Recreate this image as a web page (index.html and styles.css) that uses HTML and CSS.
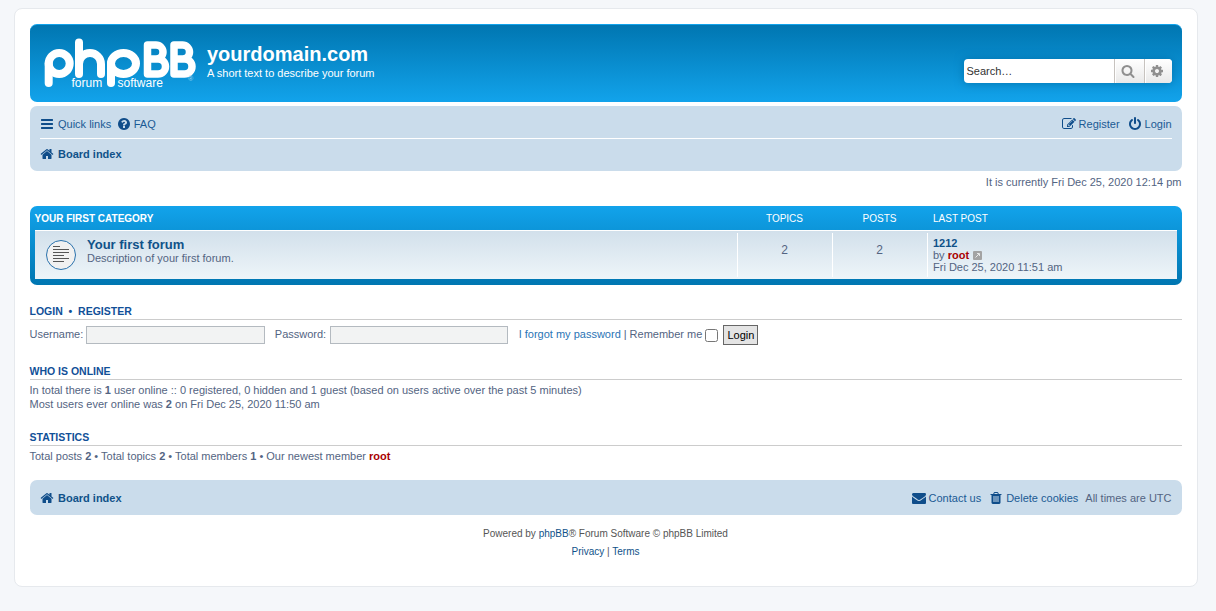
FILE: index.html
```html
<!DOCTYPE html>
<html lang="en">
<head>
<meta charset="utf-8">
<title>yourdomain.com - Index page</title>
<link rel="stylesheet" href="styles.css">
</head>
<body>
<svg class="defs" width="0" height="0" aria-hidden="true">
<symbol id="i-bars" viewBox="0 0 1792 1792"><path d="M1664 1344v128q0 26-19 45t-45 19h-1408q-26 0-45-19t-19-45v-128q0-26 19-45t45-19h1408q26 0 45 19t19 45zm0-512v128q0 26-19 45t-45 19h-1408q-26 0-45-19t-19-45v-128q0-26 19-45t45-19h1408q26 0 45 19t19 45zm0-512v128q0 26-19 45t-45 19h-1408q-26 0-45-19t-19-45v-128q0-26 19-45t45-19h1408q26 0 45 19t19 45z"/></symbol>
<symbol id="i-home" viewBox="0 0 1792 1792"><path d="M1472 992v480q0 26-19 45t-45 19h-384v-384h-256v384h-384q-26 0-45-19t-19-45v-480q0-1 .5-3t.5-3l575-474 575 474q1 2 1 6zm223-69l-62 74q-8 9-21 11h-3q-13 0-21-7l-692-577-692 577q-12 8-24 7-13-2-21-11l-62-74q-8-10-7-23.500t11-21.500l719-599q32-26 76-26t76 26l244 204v-195q0-14 9-23t23-9h192q14 0 23 9t9 23v408l219 182q10 8 11 21.500t-7 23.500z"/></symbol>
<symbol id="i-question" viewBox="0 0 1792 1792"><path d="M1024 1376v-192q0-14-9-23t-23-9h-192q-14 0-23 9t-9 23v192q0 14 9 23t23 9h192q14 0 23-9t9-23zm256-672q0-88-55.500-163t-138.500-116-170-41q-243 0-371 213-15 24 8 42l132 100q7 6 19 6 16 0 25-12 53-68 86-92 34-24 86-24 48 0 85.500 26t37.500 59q0 38-20 61t-68 45q-63 28-115.500 86.500t-52.500 125.500v36q0 14 9 23t23 9h192q14 0 23-9t9-23q0-19 21.500-49.500t54.500-49.500q32-18 49-28.500t46-35 44.500-48 28-60.500 12.500-81zm384 192q0 209-103 385.500t-279.500 279.500-385.500 103-385.500-103-279.500-279.500-103-385.500 103-385.500 279.500-279.500 385.500-103 385.500 103 279.500 279.500 103 385.500z"/></symbol>
<symbol id="i-search" viewBox="0 0 1792 1792"><path d="M1216 832q0-185-131.500-316.500t-316.500-131.500-316.500 131.500-131.500 316.500 131.500 316.500 316.500 131.500 316.500-131.500 131.500-316.500zm512 832q0 52-38 90t-90 38q-54 0-90-38l-343-342q-179 124-399 124-143 0-273.500-55.500t-225-150-150-225-55.500-273.500 55.500-273.500 150-225 225-150 273.500-55.500 273.500 55.500 225 150 150 225 55.500 273.500q0 220-124 399l343 343q37 37 37 90z"/></symbol>
<symbol id="i-cog" viewBox="0 0 1792 1792"><path d="M1152 896q0-106-75-181t-181-75-181 75-75 181 75 181 181 75 181-75 75-181zm512-109v222q0 12-8 23t-20 13l-185 28q-19 54-39 91 35 50 107 138 10 12 10 25t-9 23q-27 37-99 108t-94 71q-12 0-26-9l-138-108q-44 23-91 38-16 136-29 186-7 28-36 28h-222q-14 0-24.500-8.500t-11.500-21.500l-28-184q-49-16-90-37l-141 107q-10 9-25 9-14 0-25-11-126-114-165-168-7-10-7-23 0-12 8-23 15-21 51-66.500t54-70.500q-27-50-41-99l-183-27q-13-2-21-12.500t-8-23.500v-222q0-12 8-23t19-13l186-28q14-46 39-92-40-57-107-138-10-12-10-24 0-10 9-23 26-36 98.500-107.500t94.500-71.500q13 0 26 10l138 107q44-23 91-38 16-136 29-186 7-28 36-28h222q14 0 24.500 8.500t11.500 21.500l28 184q49 16 90 37l142-107q9-9 24-9 13 0 25 10 129 119 165 170 7 8 7 22 0 12-8 23-15 21-51 66.500t-54 70.500q26 50 41 98l183 28q13 2 21 12.500t8 23.500z"/></symbol>
<symbol id="i-power" viewBox="0 0 1792 1792"><path d="M1664 896q0 156-61 298t-164 245-245 164-298 61-298-61-245-164-164-245-61-298q0-182 80.500-343t226.500-270q43-32 95.500-25t83.500 50q32 42 24.500 94.500t-49.500 84.500q-98 74-151.500 181t-53.500 228q0 104 40.500 198.500t109.500 163.500 163.500 109.500 198.500 40.500 198.500-40.500 163.500-109.500 109.500-163.500 40.500-198.500q0-121-53.500-228t-151.500-181q-42-32-49.500-84.500t24.500-94.500q31-43 84-50t95 25q146 109 226.500 270t80.500 343zm-640-768v640q0 52-38 90t-90 38-90-38-38-90v-640q0-52 38-90t90-38 90 38 38 90z"/></symbol>
<symbol id="i-envelope" viewBox="0 0 1792 1792"><path d="M1792 710v794q0 66-47 113t-113 47h-1472q-66 0-113-47t-47-113v-794q44 49 101 87 362 246 497 345 57 42 92.500 65.500t94.500 48 110 24.500h2q51 0 110-24.500t94.500-48 92.500-65.500q170-123 498-345 57-39 100-87zm0-294q0 79-49 151t-122 123q-376 261-468 325-10 7-42.500 30.500t-54 38-52 32.500-57.500 27-50 9h-2q-23 0-50-9t-57.500-27-52-32.500-54-38-42.500-30.500q-91-64-262-182.500t-205-142.500q-62-42-117-115.500t-55-136.500q0-78 41.500-130t118.500-52h1472q65 0 112.500 47t47.500 113z"/></symbol>
<symbol id="i-trash" viewBox="0 0 1792 1792"><path d="M704 1376v-704q0-14-9-23t-23-9h-64q-14 0-23 9t-9 23v704q0 14 9 23t23 9h64q14 0 23-9t9-23zm256 0v-704q0-14-9-23t-23-9h-64q-14 0-23 9t-9 23v704q0 14 9 23t23 9h64q14 0 23-9t9-23zm256 0v-704q0-14-9-23t-23-9h-64q-14 0-23 9t-9 23v704q0 14 9 23t23 9h64q14 0 23-9t9-23zm-544-992h448l-48-117q-7-9-17-11h-317q-10 2-17 11zm928 32v64q0 14-9 23t-23 9h-96v948q0 83-47 143.500t-113 60.500h-832q-66 0-113-58.500t-47-141.500v-952h-96q-14 0-23-9t-9-23v-64q0-14 9-23t23-9h309l70-167q15-37 54-63t79-26h320q40 0 79 26t54 63l70 167h309q14 0 23 9t9 23z"/></symbol>
<symbol id="i-edit" viewBox="0 0 1792 1792"><path d="M888 1184l116-116-152-152-116 116v56h96v96h56zm440-720q-16-16-33 1l-350 350q-17 17-1 33t33-1l350-350q17-17 1-33zm80 594v190q0 119-84.500 203.500t-203.500 84.500h-832q-119 0-203.500-84.500t-84.500-203.500v-832q0-119 84.500-203.500t203.500-84.500h832q63 0 117 25 15 7 18 23 3 17-9 29l-49 49q-14 14-32 8-23-6-45-6h-832q-66 0-113 47t-47 113v832q0 66 47 113t113 47h832q66 0 113-47t47-113v-126q0-13 9-22l64-64q15-15 35-7t20 29zm-96-738l288 288-672 672h-288v-288zm444 132l-92 92-288-288 92-92q28-28 68-28t68 28l152 152q28 28 28 68t-28 68z"/></symbol>
</svg>

<div class="wrap">
  <header class="headerbar">
    <div class="logo">
      <svg class="logo-mark" viewBox="0 0 152 54" width="152" height="54" aria-hidden="true">
        <g fill="none" stroke="#fff" stroke-width="8" stroke-linecap="round" stroke-linejoin="round">
          <circle cx="15.200" cy="25.500" r="10.500"/>
          <path d="M4.700 25.500V45"/>
          <path d="M35 4.500V36M35 26A11 11 0 0 1 57 26V36"/>
          <ellipse cx="79.500" cy="25.500" rx="12.500" ry="10.500"/>
          <path d="M67 25.500V45"/>
          <path d="M103.500 7V36H114A7.500 7.500 0 0 0 114 21H103.500M112 21A7 7 0 0 0 112 7H103.500" stroke-width="7.500"/>
          <path d="M130 7V36H140.500A7.500 7.500 0 0 0 140.500 21H130M138.500 21A7 7 0 0 0 138.500 7H130" stroke-width="7.500"/>
        </g>
      </svg>
      <span class="logo-word logo-forum">forum</span>
      <span class="logo-word logo-software">software</span>
      <span class="logo-reg">®</span>
    </div>
    <div class="site-desc">
      <h1>yourdomain.com</h1>
      <p>A short text to describe your forum</p>
    </div>
    <div class="search">
      <span class="search-input">Search…</span>
      <span class="search-btn"><svg class="icon icon-grey"><use href="#i-search"/></svg></span>
      <span class="search-btn search-btn-last"><svg class="icon icon-grey"><use href="#i-cog"/></svg></span>
    </div>
  </header>

  <nav class="navbar">
    <div class="nav-row nav-row-top">
      <div class="nav-group">
        <a class="nav-item"><svg class="icon"><use href="#i-bars"/></svg>Quick links</a>
        <a class="nav-item nav-item-tight"><svg class="icon"><use href="#i-question"/></svg>FAQ</a>
      </div>
      <div class="nav-group nav-group-right">
        <a class="nav-item"><svg class="icon"><use href="#i-edit"/></svg>Register</a>
        <a class="nav-item"><svg class="icon"><use href="#i-power"/></svg>Login</a>
      </div>
    </div>
    <div class="nav-row nav-row-crumb">
      <a class="nav-item crumb"><svg class="icon"><use href="#i-home"/></svg>Board index</a>
    </div>
  </nav>

  <p class="time">It is currently Fri Dec 25, 2020 12:14 pm</p>

  <section class="forabg">
    <div class="forum-head forum-grid">
      <div class="cell-title">Your first category</div>
      <div class="cell-num">Topics</div>
      <div class="cell-num">Posts</div>
      <div class="cell-last">Last post</div>
    </div>
    <div class="forum-row forum-grid">
      <div class="forum-main">
        <svg class="forum-icon" viewBox="0 0 32 32" width="32" height="32" aria-hidden="true">
          <circle cx="16" cy="16" r="14.500" fill="#f1f1f1" stroke="#2a72ad" stroke-width="1"/>
          <g stroke="#555" stroke-width="1">
            <path d="M8 7.500H15M8 10.500H24M8 13.500H24M8 16.500H19M8 19.500H24M8 22.500H19"/>
          </g>
        </svg>
        <div>
          <a class="forum-title">Your first forum</a>
          <div class="forum-desc">Description of your first forum.</div>
        </div>
      </div>
      <div class="forum-count">2</div>
      <div class="forum-count">2</div>
      <div class="forum-last">
        <a class="last-title">1212</a>
        <div>by <a class="user">root</a> <svg class="view-post" viewBox="0 0 9 9" width="9" height="9" aria-hidden="true"><rect width="9" height="9" rx="1" fill="#a3a3a3"/><path d="M2.500 6.500L6 3M4 2.500H6.500V5" fill="none" stroke="#e8e8e8" stroke-width="1"/></svg></div>
        <div>Fri Dec 25, 2020 11:51 am</div>
      </div>
    </div>
  </section>

  <section class="login-block">
    <h3 class="section-head"><a>Login</a>&nbsp; • &nbsp;<a>Register</a></h3>
    <form class="login-form">
      <label class="login-label" for="u">Username:</label>
      <input class="login-input" id="u" type="text">
      <label class="login-label login-label-pw" for="p">Password:</label>
      <input class="login-input login-input-pw" id="p" type="password">
      <a class="forgot">I forgot my password</a>
      <span class="sep">|</span>
      <label class="remember" for="r">Remember me</label>
      <input class="remember-box" id="r" type="checkbox">
      <button class="login-btn" type="button">Login</button>
    </form>
  </section>

  <section class="info-block info-online">
    <h3 class="section-head">Who is online</h3>
    <p class="info-text">In total there is <strong>1</strong> user online :: 0 registered, 0 hidden and 1 guest (based on users active over the past 5 minutes)<br>Most users ever online was <strong>2</strong> on Fri Dec 25, 2020 11:50 am</p>
  </section>

  <section class="info-block info-stats">
    <h3 class="section-head">Statistics</h3>
    <p class="info-text">Total posts <strong>2</strong> • Total topics <strong>2</strong> • Total members <strong>1</strong> • Our newest member <a class="user">root</a></p>
  </section>

  <nav class="navbar navbar-foot">
    <a class="nav-item crumb"><svg class="icon"><use href="#i-home"/></svg>Board index</a>
    <div class="nav-group nav-group-right">
      <a class="nav-item"><svg class="icon"><use href="#i-envelope"/></svg>Contact us</a>
      <a class="nav-item"><svg class="icon"><use href="#i-trash"/></svg>Delete cookies</a>
      <span class="nav-note">All times are UTC</span>
    </div>
  </nav>

  <footer class="copyright">
    <p>Powered by <a>phpBB</a>® Forum Software © phpBB Limited</p>
    <p><a>Privacy</a> | <a>Terms</a></p>
  </footer>
</div>
</body>
</html>
```

FILE: styles.css
```css
* { box-sizing: border-box; }
html, body { margin: 0; padding: 0; }
body {
  height: 611px;
  overflow: hidden;
  background: #f5f7fa;
  color: #536482;
  font-family: "Liberation Sans", Arial, sans-serif;
  font-size: 11px;
  line-height: 14px;
  padding: 8px 18.500px 0 13.500px;
}
a { color: #105289; }
p, h1, h3 { margin: 0; }
.defs { position: absolute; }

.wrap {
  height: 579px;
  background: #fff;
  border: 1px solid #e6e9ed;
  border-radius: 8px;
  padding: 15px;
}

.icon { width: 14px; height: 14px; fill: #0f4d8a; flex: none; }
.icon-grey { fill: #8f8f8f; }

.headerbar {
  height: 78px;
  display: flex;
  border-radius: 7px;
  border-top: 1px solid #12a3eb;
  background: linear-gradient(to bottom, #0076b1 0%, #12a3eb 100%);
  color: #fff;
  padding: 13px 10px 0 14px;
}
.logo { position: relative; width: 163.500px; height: 54px; flex: none; }
.logo-mark { display: block; overflow: visible; }
.logo-word {
  position: absolute;
  top: 38px;
  font-size: 12px;
  line-height: 14px;
  color: #fff;
}
.logo-forum { left: 28px; }
.logo-software { left: 74px; }
.logo-reg { position: absolute; left: 144.500px; top: 37px; font-size: 7px; line-height: 8px; color: #9fd6f2; }

.site-desc { flex: 1; padding-top: 4px; }
.site-desc h1 { font-size: 20px; line-height: 24px; font-weight: bold; color: #fff; }
.site-desc p { font-size: 11px; line-height: 13px; margin-top: 1px; color: #fff; }

.search {
  display: flex;
  align-self: flex-start;
  margin-top: 21px;
  height: 24px;
  width: 208px;
  border-radius: 4px;
  box-shadow: 0 0 10px #0075b0;
  background: #fff;
  overflow: hidden;
}
.search-input {
  flex: 1;
  font-size: 11px;
  line-height: 24px;
  padding-left: 3px;
  color: #333;
}
.search-btn {
  width: 29.500px;
  display: flex;
  align-items: center;
  justify-content: center;
  padding-right: 2px;
  border-left: 1px solid #c7c3bf;
  box-shadow: inset 1px 0 #fff;
  background: linear-gradient(to bottom, #fff 0%, #e9e9e9 100%);
}
.search-btn-last { width: 28px; }

.navbar {
  background: #cadceb;
  border-radius: 7px;
  margin-top: 4px;
  height: 65px;
  padding: 0 10px;
}
.nav-row { display: flex; align-items: center; }
.nav-row-top {
  justify-content: space-between;
  height: 33px;
  border-bottom: 1px solid #fff;
  padding-top: 3px;
}
.nav-row-crumb { height: 30px; }
.nav-group { display: flex; align-items: center; gap: 6px; }
.nav-item { display: flex; align-items: center; gap: 4.500px; color: #1a5a94; }
.nav-item-tight { gap: 2.500px; }
.nav-group-right { gap: 8px; }
.nav-group-right .nav-item { gap: 3px; }
.crumb { font-weight: bold; color: #105289; }

.time { text-align: right; margin-top: 4px; line-height: 14px; }

.forabg {
  margin-top: 17px;
  height: 79px;
  padding: 5px;
  border-radius: 7px;
  background: linear-gradient(to bottom, #12a3eb 0%, #0076b1 100%);
}
.forum-grid {
  display: grid;
  grid-template-columns: 702.500px 95px 95px 1fr;
}
.forum-head {
  height: 19px;
  padding-top: 1px;
  text-transform: uppercase;
  font-size: 10px;
  line-height: 14px;
  color: #fff;
}
.cell-title { font-weight: bold; }
.cell-num { text-align: center; }
.cell-last { padding-left: 6px; }

.forum-row {
  height: 49px;
  padding: 2px 0;
  border-top: 1px solid #fff;
  background: linear-gradient(to bottom, #d2e0eb 0%, #eef5f9 100%);
}
.forum-main { display: flex; gap: 10px; padding: 4px 0 0 10.500px; }
.forum-icon { flex: none; margin-top: 2px; }
.forum-title { display: block; font-size: 13px; line-height: 15px; font-weight: bold; color: #105289; }
.forum-desc { line-height: 13px; }
.forum-count {
  border-left: 1px solid #fff;
  padding-right: 1px;
  text-align: center;
  font-size: 12px;
  line-height: 34px;
}
.forum-last { border-left: 1px solid #fff; padding: 4px 0 0 5px; line-height: 12px; }
.last-title { display: block; font-weight: bold; color: #105289; }
.user { font-weight: bold; color: #a00; }
.view-post { margin-left: 1px; vertical-align: -1px; }

.section-head {
  text-transform: uppercase;
  font-size: 10.500px;
  line-height: 14px;
  font-weight: bold;
  color: #115098;
  border-bottom: 1px solid #ccc;
  padding-bottom: 1px;
}
.section-head a { color: #115098; }

.login-block { margin-top: 19px; }
.login-form { display: flex; align-items: center; margin-top: 5px; height: 20px; }
.login-label { margin-right: 2.500px; padding-bottom: 2px; }
.login-label-pw { margin-left: 10px; margin-right: 3.500px; }
.login-input {
  width: 179px;
  height: 18px;
  padding: 0;
  background: #f2f3f3;
  border: 1px solid #b4bac0;
  border-radius: 0;
}
.login-input-pw { width: 178px; }
.forgot { margin-left: 11px; padding-bottom: 2px; color: #2a74b5; }
.sep { margin: 0 3px; padding-bottom: 2px; }
.remember { padding-bottom: 2px; }
.remember-box { width: 13px; height: 13px; margin: 1px 0 0 3px; }
.login-btn {
  margin-left: 5px;
  width: 35px;
  height: 20px;
  padding: 0;
  background: #e4e4e4;
  border: 1px solid #666;
  font: 11px "Liberation Sans", Arial, sans-serif;
  color: #000;
}

.info-online { margin-top: 19px; }
.info-stats { margin-top: 19px; }
.info-text { margin-top: 3px; line-height: 14px; }
.info-text strong { color: #536482; }

.navbar-foot {
  height: 35px;
  margin-top: 17px;
  display: flex;
  align-items: center;
  justify-content: space-between;
}
.nav-note { color: #536482; margin-left: -1px; }

.copyright { margin-top: 10px; text-align: center; font-size: 10px; line-height: 18px; color: #555; }
```
